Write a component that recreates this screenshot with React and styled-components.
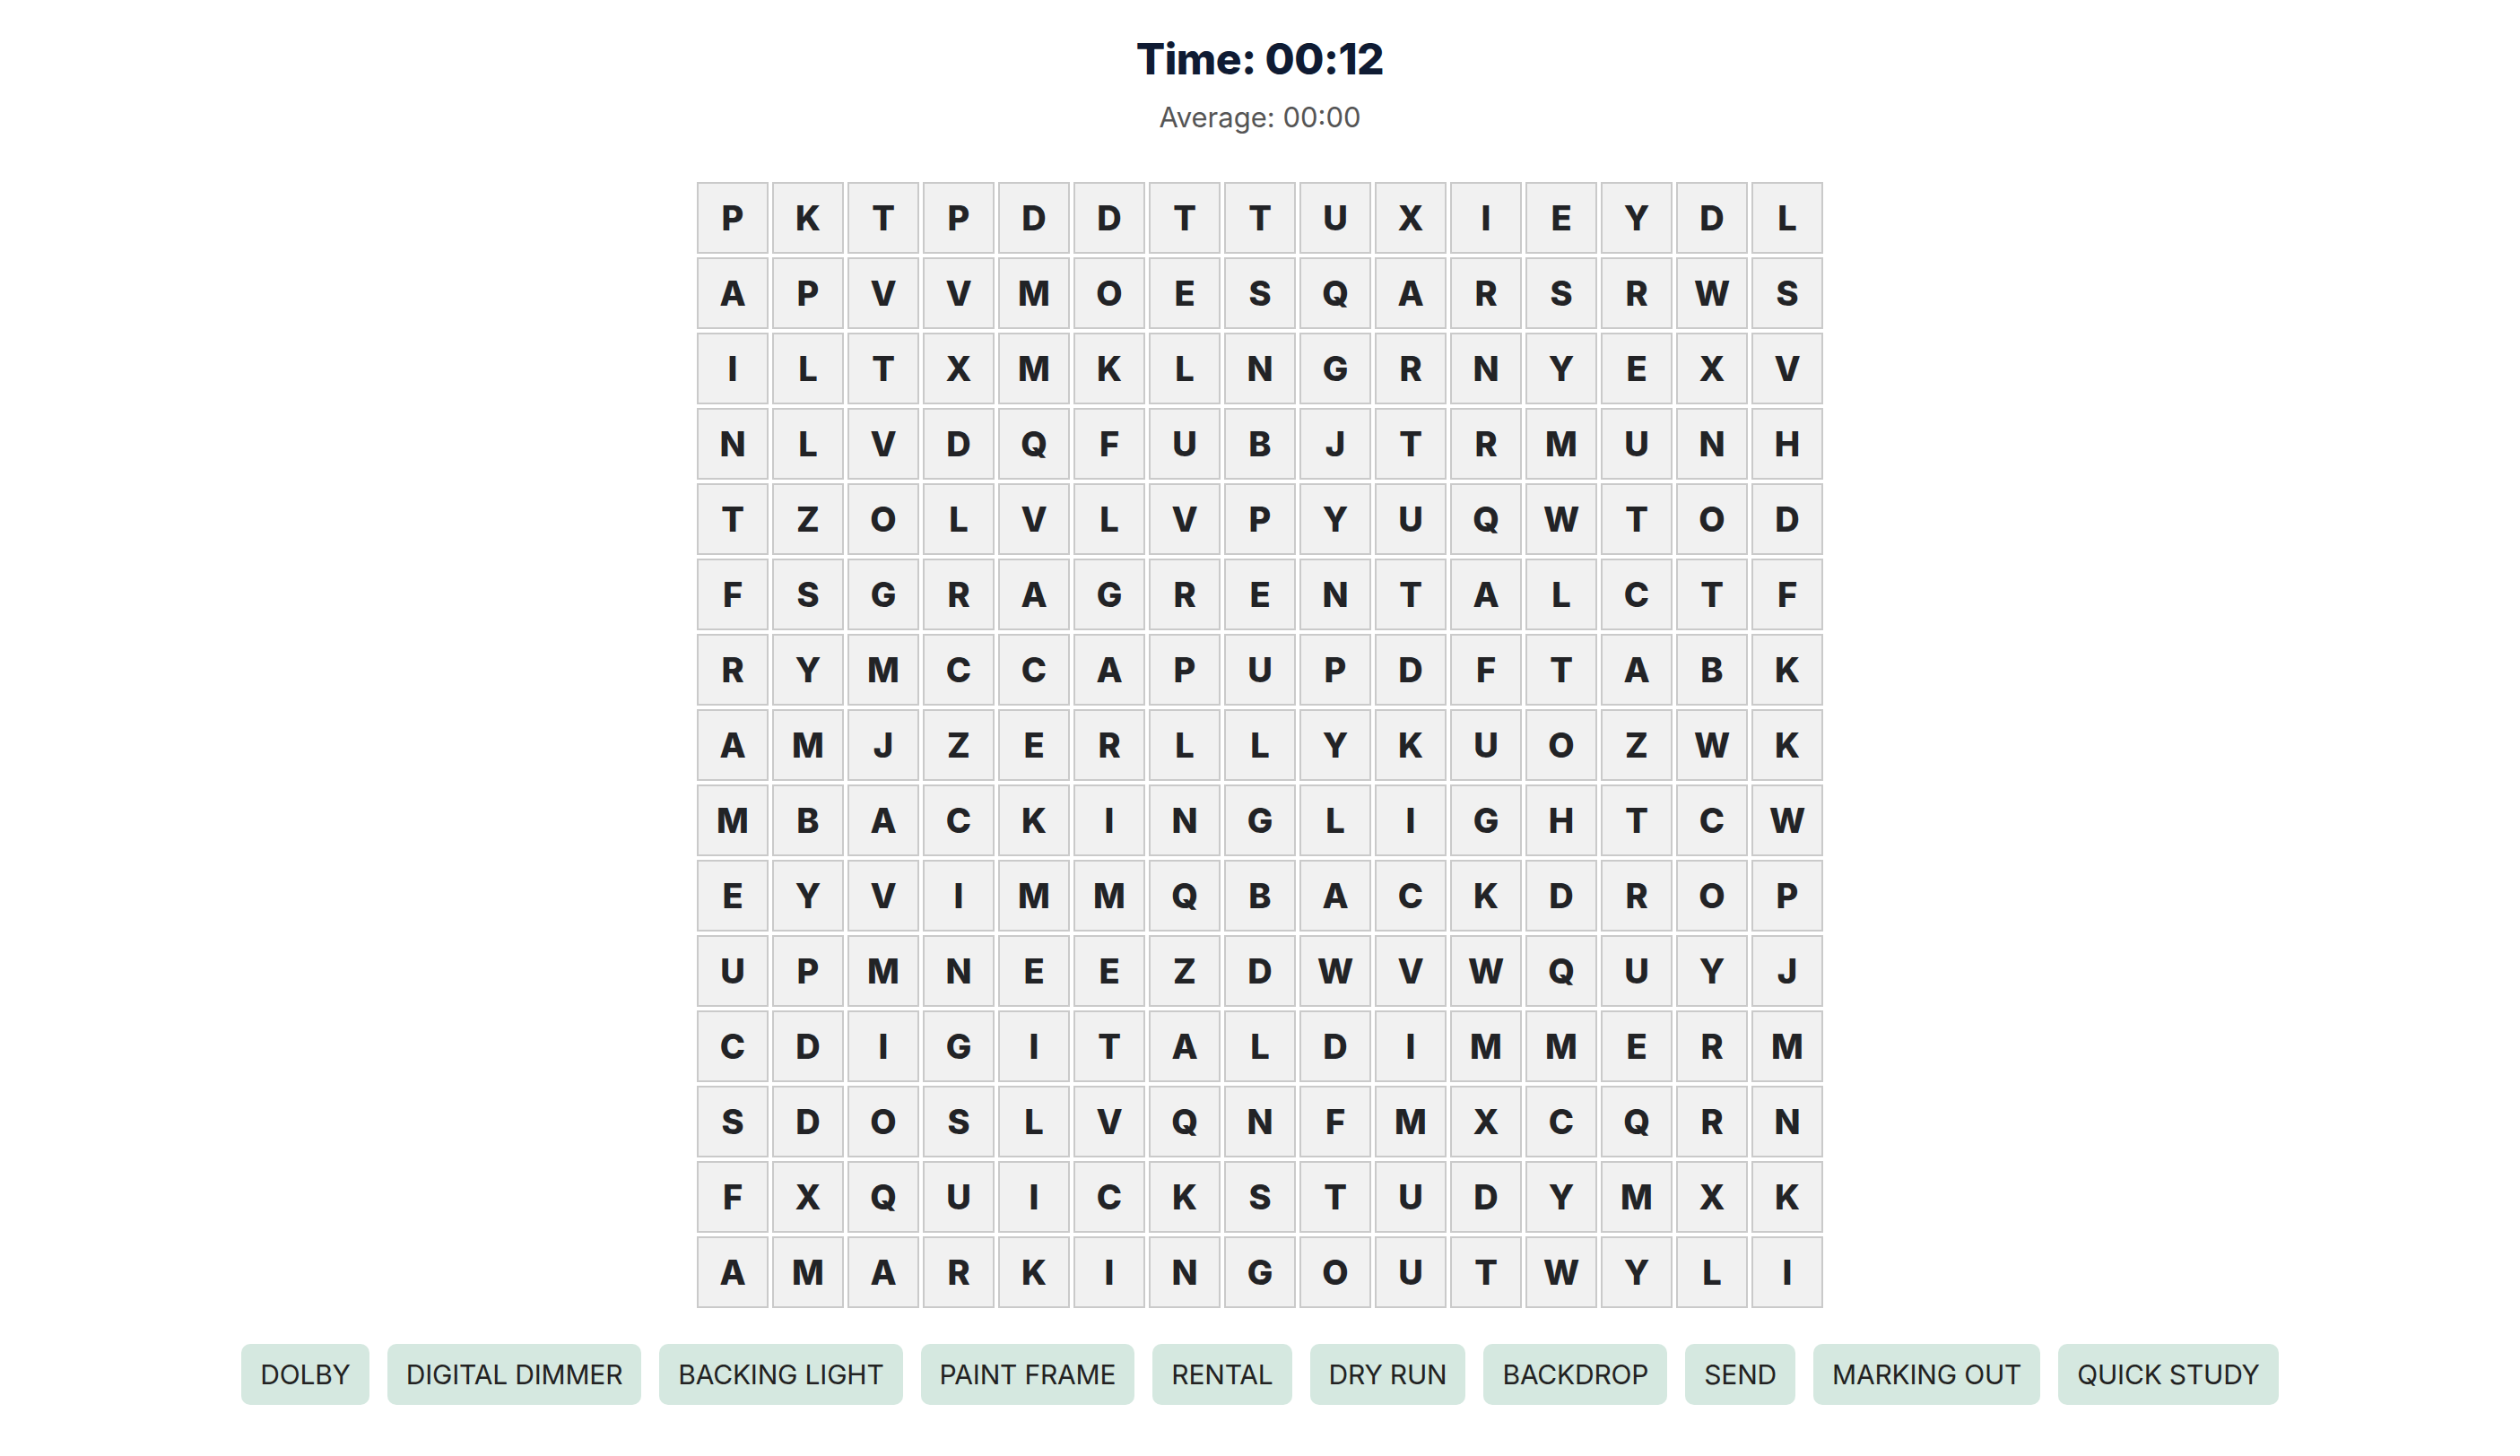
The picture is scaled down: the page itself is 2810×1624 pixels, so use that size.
import React from 'react'
import styled, { createGlobalStyle } from 'styled-components'

const GlobalStyle = createGlobalStyle`
    html, body {
        margin: 0;
        padding: 0;
        background: #ffffff;
        font-family: Inter, "Open Sans", sans-serif;
    }
`

const Page = styled.div`
    display: flex;
    flex-direction: column;
    align-items: center;
    padding-top: 36px;
`

const Title = styled.h1`
    margin: 0;
    font-size: 48px;
    line-height: 60px;
    font-weight: 800;
    color: #0f1b33;
    letter-spacing: -0.5px;
`

const Average = styled.p`
    margin: 15px 0 0;
    font-size: 31px;
    line-height: 40px;
    font-weight: 400;
    color: #555555;
`

const Board = styled.div`
    display: grid;
    grid-template-columns: repeat(15, 80px);
    grid-auto-rows: 80px;
    gap: 4px;
    margin-top: 52px;
`

const Cell = styled.div`
    box-sizing: border-box;
    border: 2px solid #cacaca;
    background: #f1f1f1;
    display: flex;
    align-items: center;
    justify-content: center;
    font-size: 38px;
    font-weight: 800;
    color: #222326;
    user-select: none;
`

const WordList = styled.div`
    display: flex;
    flex-wrap: wrap;
    justify-content: center;
    gap: 20px;
    margin-top: 40px;
`

const Word = styled.span`
    background: #d5e8e0;
    color: #222;
    border-radius: 10px;
    height: 68px;
    padding: 0 21px;
    display: flex;
    align-items: center;
    font-size: 30px;
    font-weight: 400;
    letter-spacing: -0.2px;
`

const rows = [
    'PKTPDDTTUXIEYDL',
    'APVVMOESQARSRWS',
    'ILTXMKLNGRNYEXV',
    'NLVDQFUBJTRMUNH',
    'TZOLVLVPYUQWTOD',
    'FSGRAGRENTALCTF',
    'RYMCCAPUPDFTABK',
    'AMJZERLLYKUOZWK',
    'MBACKINGLIGHTCW',
    'EYVIMMQBACKDROP',
    'UPMNEEZDWVWQUYJ',
    'CDIGITALDIMMERM',
    'SDOSLVQNFMXCQRN',
    'FXQUICKSTUDYMXK',
    'AMARKINGOUTWYLI',
]

const words = [
    'DOLBY',
    'DIGITAL DIMMER',
    'BACKING LIGHT',
    'PAINT FRAME',
    'RENTAL',
    'DRY RUN',
    'BACKDROP',
    'SEND',
    'MARKING OUT',
    'QUICK STUDY',
]

export default function App() {
    return (
        <>
            <GlobalStyle />
            <Page>
                <Title>Time: 00:12</Title>
                <Average>Average: 00:00</Average>
                <Board>
                    {rows.map((row, r) =>
                        row.split('').map((ch, c) => (
                            <Cell key={r + '-' + c}>{ch}</Cell>
                        ))
                    )}
                </Board>
                <WordList>
                    {words.map((w) => (
                        <Word key={w}>{w}</Word>
                    ))}
                </WordList>
            </Page>
        </>
    )
}
